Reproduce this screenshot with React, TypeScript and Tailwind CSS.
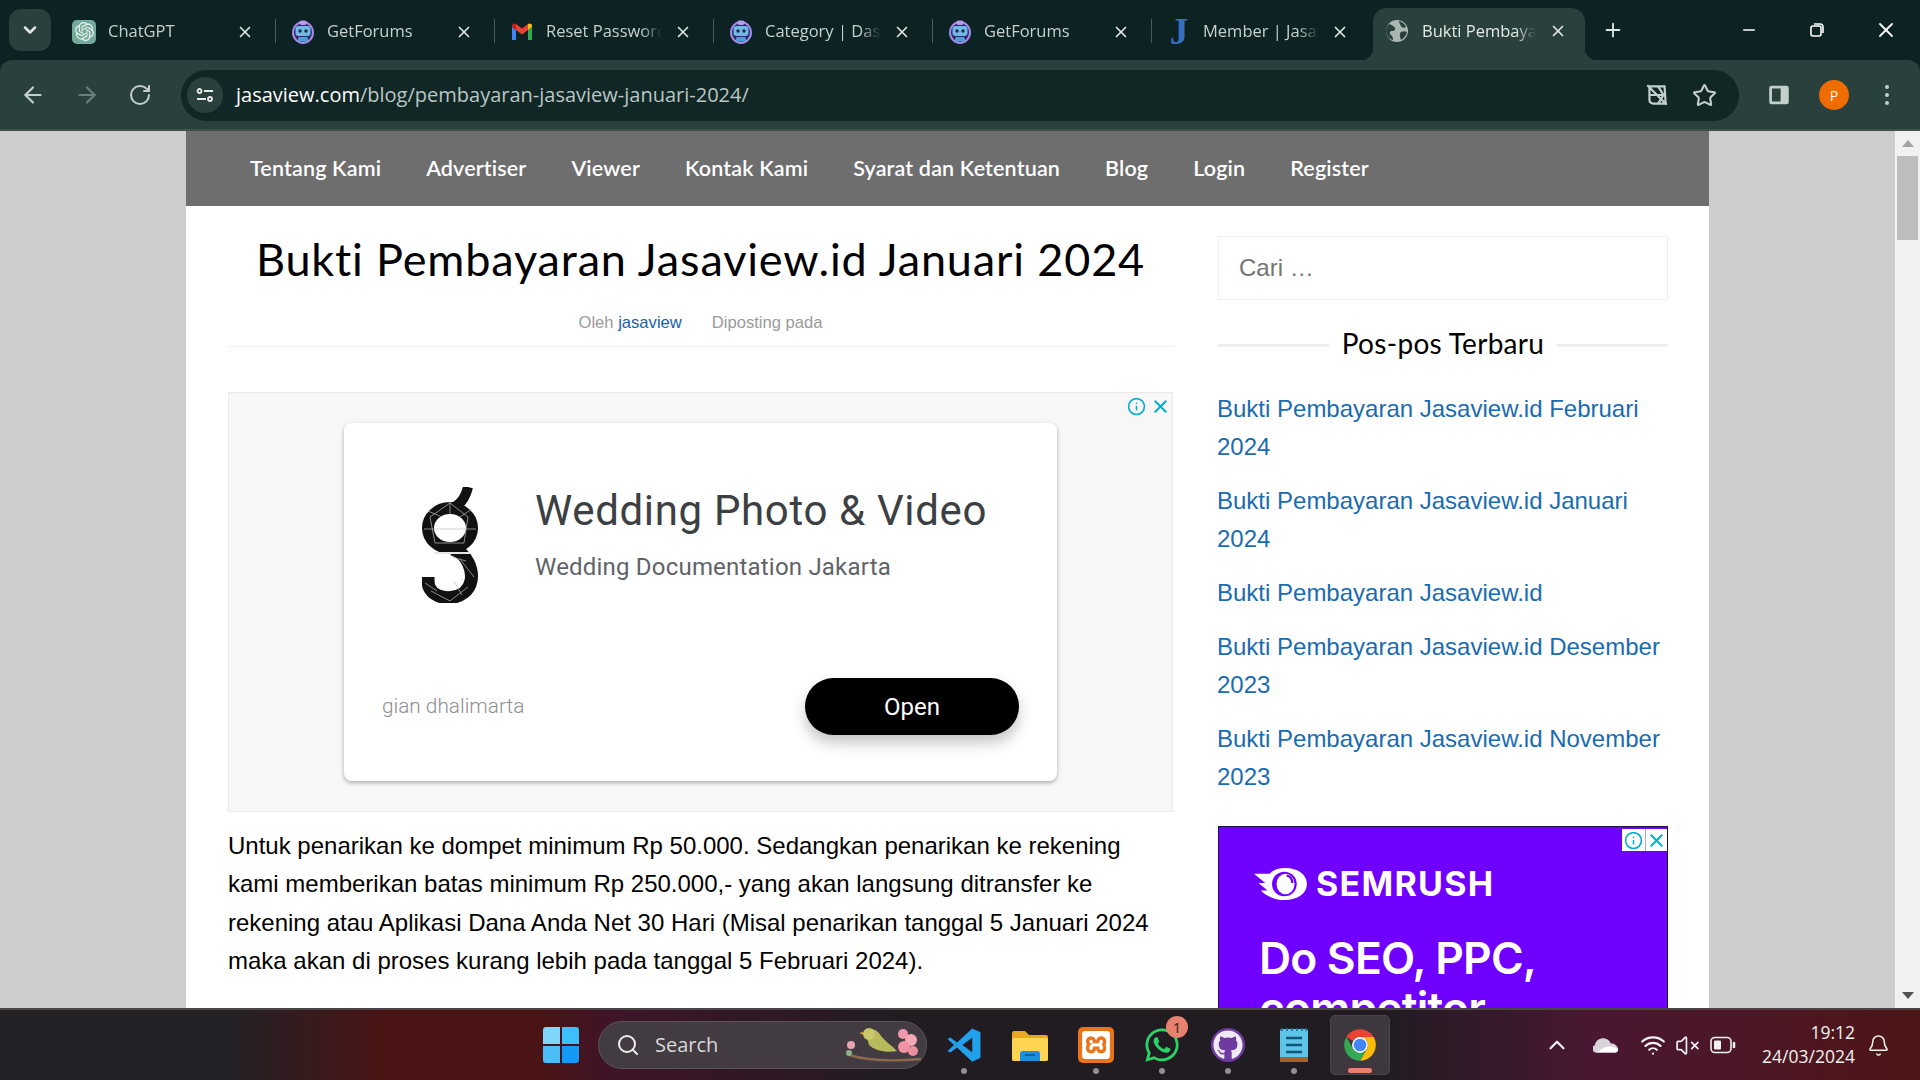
import React from "react"
import { ArrowLeft, ArrowRight, RotateCw, ChevronDown, ChevronUp, X, Plus, Minus, Star, Search, Wifi, VolumeX, Bell, Info } from "lucide-react"
import { SiOpenai, SiXampp } from "react-icons/si"
import { FaWhatsapp, FaGithub } from "react-icons/fa"

const RobotIcon = () => (
  <svg viewBox="0 0 24 24" className="w-6 h-6 shrink-0">
    <ellipse cx="12" cy="12.500" rx="10" ry="10.500" fill="#2a2a6a" stroke="#a78bea" strokeWidth="2" />
    <rect x="8.500" y="0.500" width="7" height="4.500" rx="2" fill="#b79cf0" />
    <rect x="4.500" y="6" width="15" height="10" rx="3" fill="#6fb9e4" />
    <circle cx="9" cy="11" r="1.700" fill="#14304a" />
    <circle cx="15" cy="11" r="1.700" fill="#14304a" />
    <rect x="7" y="17" width="10" height="4.500" rx="1.500" fill="#4f9fd4" />
  </svg>
)

const GmailIcon = () => (
  <svg viewBox="0 0 24 24" className="w-6 h-6 shrink-0">
    <path d="M2 20h4V10L2 7z" fill="#4285f4" />
    <path d="M18 20h4V7l-4 3z" fill="#34a853" />
    <path d="M18 4v6l4-3V5.500c0-1.800-2.400-2.800-4-1.500" fill="#fbbc04" />
    <path d="M6 10V4l6 4.500L18 4v6l-6 4.500z" fill="#ea4335" />
    <path d="M2 5.500V7l4 3V4C4.400 2.700 2 3.700 2 5.500" fill="#c5221f" />
  </svg>
)

const GlobeIcon = () => (
  <svg viewBox="0 0 24 24" className="w-6 h-6 shrink-0">
    <circle cx="12" cy="12" r="11" fill="#aab6b4" />
    <path d="M4 5c3 1 5 2 6 4s-1 3-3 3-3 2-1 4 2 3 2 5c-4-1-7-5-7-9 0-3 1-5 3-7zM14 2c3 1 6 3 7 6-2 1-4 1-5-1s-2-3-2-5zM16 13c2-1 4-1 6 0-1 4-3 6-6 8-1-3-2-6 0-8z" fill="#2a403d" />
  </svg>
)

const ChatGptIcon = () => (
  <span className="w-6 h-6 shrink-0 rounded-[5px] bg-[#74aa9c] flex items-center justify-center">
    <SiOpenai className="w-[19px] h-[19px] text-[#e8f2ef]" />
  </span>
)

const JIcon = () => (
  <span className="w-6 h-6 shrink-0 flex items-center justify-center text-[#3a6fc0] font-bold text-[37px] leading-none font-['Liberation_Serif',serif]">J</span>
)

const tabs = [
  { title: "ChatGPT", icon: <ChatGptIcon /> },
  { title: "GetForums", icon: <RobotIcon /> },
  { title: "Reset Password", icon: <GmailIcon /> },
  { title: "Category | Dashboard", icon: <RobotIcon /> },
  { title: "GetForums", icon: <RobotIcon /> },
  { title: "Member | Jasaview", icon: <JIcon /> },
]

const navLinks = ["Tentang Kami", "Advertiser", "Viewer", "Kontak Kami", "Syarat dan Ketentuan", "Blog", "Login", "Register"]

const recent = [
  "Bukti Pembayaran Jasaview.id Februari 2024",
  "Bukti Pembayaran Jasaview.id Januari 2024",
  "Bukti Pembayaran Jasaview.id",
  "Bukti Pembayaran Jasaview.id Desember 2023",
  "Bukti Pembayaran Jasaview.id November 2023",
]

const TabStrip = () => (
  <div className="h-[60px] bg-[#0d2323] flex items-start font-['Open_Sans',sans-serif] text-[16.5px]">
    <div className="ml-[9px] mt-[9px] w-[42px] h-[42px] rounded-[12px] bg-[#2a403d] flex items-center justify-center text-[#dfe6e4]">
      <ChevronDown size={20} strokeWidth={3} />
    </div>
    <div className="ml-[6px] flex h-[51px] mt-[9px]">
      {tabs.map((t, i) => (
        <div key={i} className="w-[219px] flex items-center pl-[15px] pr-[22px] pb-[6px] gap-[12px] relative">
          {t.icon}
          <span className="flex-1 whitespace-nowrap overflow-hidden text-[#c6d0ce] [mask-image:linear-gradient(to_right,black_82%,transparent)]">{t.title}</span>
          <X size={18} strokeWidth={2.2} className="text-[#dfe6e4] shrink-0" />
          {i < 5 && <span className="absolute right-0 top-[10px] h-[24px] w-px bg-[#4a5d5a]" />}
        </div>
      ))}
      <div className="w-[212px] -mt-px h-[52px] ml-[2px] bg-[#2a403d] rounded-t-[14px] flex items-center pl-[12px] pr-[18px] pb-[6px] gap-[13px] relative">
        <span className="absolute -left-[12px] bottom-0 w-3 h-3 bg-[radial-gradient(circle_at_0_0,transparent_12px,#2a403d_12.5px)]" />
        <span className="absolute -right-[12px] bottom-0 w-3 h-3 bg-[radial-gradient(circle_at_100%_0,transparent_12px,#2a403d_12.5px)]" />
        <GlobeIcon />
        <span className="flex-1 whitespace-nowrap overflow-hidden text-[#e4eae8] [mask-image:linear-gradient(to_right,black_82%,transparent)]">Bukti Pembayaran</span>
        <X size={18} strokeWidth={2.2} className="text-[#e4eae8] shrink-0" />
      </div>
    </div>
    <div className="ml-[17px] mt-[19px] text-[#dfe6e4]">
      <Plus size={22} strokeWidth={2} />
    </div>
    <div className="ml-auto flex h-[60px] text-white">
      <div className="w-[68px] flex items-center justify-center -translate-x-px"><Minus size={18} strokeWidth={2} /></div>
      <div className="w-[68px] flex items-center justify-center -translate-x-px">
        <svg viewBox="0 0 16 16" className="w-4 h-4" fill="none" stroke="currentColor" strokeWidth="1.6">
          <rect x="2" y="4" width="10" height="10" rx="2" />
          <path d="M5 2h6a3 3 0 0 1 3 3v6" />
        </svg>
      </div>
      <div className="w-[68px] flex items-center justify-center"><X size={24} strokeWidth={1.8} /></div>
    </div>
  </div>
)

const Toolbar = () => (
  <div className="h-[71px] bg-[#2a403d] rounded-t-[12px] border-b-2 border-[#3f504e] flex items-center pt-px text-[#c3cfcc]">
    <div className="w-[181px] flex items-center pl-[20px] gap-[28px] shrink-0">
      <ArrowLeft size={26} strokeWidth={2} />
      <ArrowRight size={26} strokeWidth={2} className="text-[#6d7e7b]" />
      <RotateCw size={24} strokeWidth={2} />
    </div>
    <div className="w-[1558px] h-[51px] rounded-full bg-[#112726] flex items-center pl-[6px] pr-[22px]">
      <div className="w-[36px] h-[36px] rounded-full bg-[#2a403d] flex items-center justify-center shrink-0">
        <svg viewBox="0 0 20 20" className="w-5 h-5" fill="none" stroke="#e4eae8" strokeWidth="1.8">
          <path d="M9 6h9M2 14h9" />
          <circle cx="4.500" cy="6" r="2" />
          <circle cx="15" cy="14" r="2" />
        </svg>
      </div>
      <div className="ml-[13px] text-[20px] font-['Open_Sans',sans-serif] whitespace-nowrap">
        <span className="text-white">jasaview.com</span>
        <span className="text-[#b9c6c3]">/blog/pembayaran-jasaview-januari-2024/</span>
      </div>
      <div className="ml-auto flex items-center gap-[22px]">
        <svg viewBox="0 0 24 24" className="w-[26px] h-[26px]" fill="none" stroke="#c3cfcc" strokeWidth="2">
          <path d="M5 4h14l1 16H9c-2.500 0-4-1.500-4-4zM5 12h15M13 4l5 8-5 8M3 3l18 18" />
        </svg>
        <Star size={25} strokeWidth={2} />
      </div>
    </div>
    <div className="ml-[27px] flex items-center">
      <svg viewBox="0 0 24 24" className="w-[26px] h-[26px]">
        <rect x="3" y="3.500" width="18" height="17" rx="2" fill="#c3cfcc" />
        <rect x="5.500" y="6" width="8" height="12" fill="#2a403d" />
      </svg>
      <div className="ml-[27px] w-[30px] h-[30px] rounded-full bg-[#ef6c00] text-white text-[14px] flex items-center justify-center font-['Open_Sans',sans-serif]">P</div>
      <div className="ml-[36px] flex flex-col gap-[4px]">
        <span className="w-1 h-1 rounded-full bg-[#c3cfcc]" />
        <span className="w-1 h-1 rounded-full bg-[#c3cfcc]" />
        <span className="w-1 h-1 rounded-full bg-[#c3cfcc]" />
      </div>
    </div>
  </div>
)

const GLogo = () => (
  <svg viewBox="0 0 56 116" className="w-[56px] h-[116px]" fill="none">
    <path d="M28 22C38 18 43 12 46 0" stroke="#111" strokeWidth="10" />
    <ellipse cx="28" cy="41" rx="22" ry="20" stroke="#111" strokeWidth="12" />
    <path d="M30 62C46 66 51 84 49 94 45 114 14 116 7 100 6 97 6 94 6 90" stroke="#111" strokeWidth="13" />
    <path d="M8 30 28 16l18 14-4 26H13zM2 42h52M28 15v12M9 104l19 10 18-14M38 72l14 18M6 24l14 6M50 22l-12 8M44 74 30 70M3 96l12 8M40 108l-8-14" stroke="#bdbdbd" strokeWidth="0.7" />
    <path d="M12 66h36" stroke="#e4e4e4" strokeWidth="1.800" />
  </svg>
)

const AdBadge = ({ boxed }: { boxed?: boolean }) => (
  <div className={boxed ? "flex bg-white h-[22px]" : "flex items-center gap-[2px] h-[22px]"}>
    <Info size={boxed ? 19 : 19} strokeWidth={2} className="text-[#00aecd] mx-[2px] self-center" />
    {boxed && <span className="w-px bg-[#b9a5d8]" />}
    <X size={boxed ? 21 : 21} strokeWidth={2.2} className="text-[#00aecd] self-center" />
  </div>
)

const WeddingAd = () => (
  <div className="h-[420px] bg-[#f7f7f7] border border-[#eaeaea] relative flex items-center justify-center font-['Roboto',sans-serif]">
    <div className="absolute top-[2px] right-[1px]"><AdBadge /></div>
    <div className="w-[713px] h-[358px] bg-white rounded-[8px] shadow-[0_2px_4px_rgba(60,64,67,0.4)] flex flex-col">
      <div className="flex pt-[64px] pl-[78px]">
        <GLogo />
        <div className="ml-[57px] pt-[1px]">
          <div className="text-[42px] leading-[46px] text-[#3c4043] tracking-[0.65px]">Wedding Photo &amp; Video</div>
          <div className="mt-[19px] text-[24px] leading-[28px] text-[#5f6368] tracking-[0.2px]">Wedding Documentation Jakarta</div>
        </div>
      </div>
      <div className="mt-[75px] flex items-center justify-between pl-[38px] pr-[38px]">
        <span className="text-[20.8px] font-light text-[#8f8f8f]">gian dhalimarta</span>
        <span className="w-[214px] h-[57px] rounded-full bg-black text-white text-[24px] flex items-center justify-center shadow-[0_8px_14px_rgba(60,64,67,0.3)]">Open</span>
      </div>
    </div>
  </div>
)

const SemrushAd = () => (
  <div className="mt-[30px] h-[240px] bg-[#6f00ff] border border-[#20104a] relative font-['Inter',sans-serif] text-white">
    <div className="absolute top-[2px] right-0"><AdBadge boxed /></div>
    <div className="pt-[40px] pl-[35px] flex items-center">
      <svg viewBox="0 0 48 34" preserveAspectRatio="none" className="w-[54px] h-[32px]">
        <path d="M0 6h14c4-5 9-6 14-6 11 0 19 7 19 17s-8 17-20 17C17 34 9 28 6 24h6L4 16h6z" fill="#fff" />
        <ellipse cx="27" cy="17" rx="11" ry="13" fill="#6f00ff" />
        <ellipse cx="28" cy="17" rx="8" ry="11" fill="#fff" />
        <path d="M29 8c4 1 5 5 5 8" stroke="#6f00ff" strokeWidth="2" fill="none" />
      </svg>
      <span className="ml-[8px] text-[34px] font-bold leading-none tracking-[1.3px]">SEMRUSH</span>
    </div>
    <div className="mt-[32px] pl-[40px] text-[44.4px] leading-[50px] font-semibold tracking-[-0.8px]">
      Do SEO, PPC,
      <br />
      competitor
    </div>
  </div>
)

const Page = () => (
  <div className="flex-1 min-h-0 flex overflow-hidden bg-[#cdcdcd]">
    <div className="w-[186px] shrink-0" />
    <div className="w-[1523px] shrink-0 bg-white">
      <nav className="h-[75px] bg-[#6e6e6e] flex items-center pl-[64px] gap-[45px] text-white text-[21.5px] tracking-[0.15px] font-semibold font-['Lato',sans-serif]">
        {navLinks.map((l) => (
          <span key={l}>{l}</span>
        ))}
      </nav>
      <div className="flex pl-[42px]">
        <main className="w-[945px] shrink-0">
          <h1 className="mt-[23px] text-center text-[45px] leading-[60px] text-black font-['Lato',sans-serif] tracking-[0.85px]">Bukti Pembayaran Jasaview.id Januari 2024</h1>
          <div className="mt-[22px] pb-[11px] border-b border-[#eeeeee] text-center text-[16.6px] leading-[24px] text-[#9a9a9a] font-['Liberation_Sans',sans-serif] flex justify-center gap-[30px]">
            <span>Oleh <span className="text-[#1a5fa8]">jasaview</span></span>
            <span>Diposting pada</span>
          </div>
          <div className="mt-[45px]"><WeddingAd /></div>
          <p className="mt-[15px] text-[24px] leading-[38.4px] text-black font-['Liberation_Sans',sans-serif]">
            Untuk penarikan ke dompet minimum Rp 50.000. Sedangkan penarikan ke rekening kami memberikan batas minimum Rp 250.000,- yang akan langsung ditransfer ke rekening atau Aplikasi Dana Anda Net 30 Hari (Misal penarikan tanggal 5 Januari 2024 maka akan di proses kurang lebih pada tanggal 5 Februari 2024).
          </p>
        </main>
        <aside className="ml-[45px] w-[450px] shrink-0">
          <div className="mt-[30px] h-[64px] border border-[#eeeeee] flex items-center pl-[20px] text-[24px] text-[#757575] font-['Liberation_Sans',sans-serif]">Cari …</div>
          <div className="mt-[23px] flex items-center gap-[13px]">
            <span className="flex-1 h-[3px] mt-[5px] bg-[#eeeeee]" />
            <h2 className="text-[28px] leading-[40px] tracking-[0.3px] text-black font-['Lato',sans-serif]">Pos-pos Terbaru</h2>
            <span className="flex-1 h-[3px] mt-[5px] bg-[#eeeeee]" />
          </div>
          <ul className="mt-[27px] -ml-px flex flex-col gap-[16px] text-[24px] leading-[38px] text-[#1a6bb0] font-['Liberation_Sans',sans-serif]">
            {recent.map((r) => (
              <li key={r}>{r}</li>
            ))}
          </ul>
          <SemrushAd />
        </aside>
      </div>
    </div>
    <div className="w-[186px] shrink-0" />
    <div className="w-[25px] shrink-0 bg-[#f1f1f1] flex flex-col items-center">
      <span className="mt-[9px] w-0 h-0 border-x-[6px] border-x-transparent border-b-[7px] border-b-[#a3a3a3]" />
      <span className="mt-[9px] w-[21px] h-[84px] bg-[#bdbdbd]" />
      <span className="mt-auto mb-[9px] w-0 h-0 border-x-[6px] border-x-transparent border-t-[7px] border-t-[#505050]" />
    </div>
  </div>
)

const Dot = () => <span className="absolute bottom-[1px] left-1/2 -translate-x-1/2 w-[6px] h-[6px] rounded-full bg-[#8f8f8f]" />

const AppSlot = ({ children, dot, className }: { children: React.ReactNode; dot?: boolean; className?: string }) => (
  <div className={"w-[60px] h-[60px] relative flex items-center justify-center " + (className || "")}>
    {children}
    {dot && <Dot />}
  </div>
)

const Taskbar = () => (
  <div className="h-[72px] shrink-0 border-t-2 border-[#4a4446] bg-[linear-gradient(90deg,#232126_0%,#232126_12%,#4a1414_20%,#4a1414_28%,#3f1428_32%,#201c22_47%,#201c22_72%,#4a1733_83%,#4f1616_100%)] flex items-center relative text-white font-['Open_Sans',sans-serif]">
    <div className="ml-[543px] w-[36px] h-[36px] grid grid-cols-2 gap-[2px]">
      <span className="rounded-tl-[3px] bg-[#7fd6fb]" />
      <span className="rounded-tr-[3px] bg-[#3cc0fb]" />
      <span className="rounded-bl-[3px] bg-[#4dbdf9]" />
      <span className="rounded-br-[3px] bg-[#159bf5]" />
    </div>
    <div className="ml-[19px] w-[329px] h-[48px] rounded-full bg-[#423c42] border border-[#5b555a] flex items-center pl-[17px] text-[20px] text-[#d8d8d8] relative">
      <Search size={24} strokeWidth={2} className="text-[#ededed]" />
      <span className="ml-[15px]">Search</span>
      <svg viewBox="0 0 80 40" className="absolute right-[3px] top-[3px] w-[80px] h-[40px]">
        <path d="M6 30c20 6 50 6 72 4" stroke="#8a6a48" strokeWidth="2.500" fill="none" />
        <path d="M22 6c6-4 13-1 16 5 4 5 10 9 16 15-10 2-22 0-28-6z" fill="#b8b95a" />
        <circle cx="26" cy="9" r="6" fill="#c8c86a" />
        <path d="M21 7l-5 1 5 2z" fill="#d8b040" />
        <circle cx="60" cy="9" r="5" fill="#ef9aa8" />
        <circle cx="68" cy="15" r="6" fill="#f4a8b4" />
        <circle cx="61" cy="22" r="6" fill="#f191a2" />
        <circle cx="70" cy="26" r="5" fill="#ee8fa0" />
        <circle cx="8" cy="20" r="4" fill="#e9a4ae" />
        <circle cx="6" cy="28" r="3" fill="#8fb08a" />
      </svg>
    </div>
    <div className="ml-[7px] flex gap-[6px]">
      <AppSlot dot>
        <svg viewBox="0 0 24 24" className="w-[38px] h-[38px]">
          <path fillRule="evenodd" d="M17.200 1.500 7.600 10.400 3.400 7.200 1.600 8.200 5.700 12l-4.100 3.800 1.800 1 4.200-3.200 9.600 8.900 5.200-2.400V3.900zM17.200 7.400v9.200L11 12z" fill="#23a0ec" />
        </svg>
      </AppSlot>
      <AppSlot>
        <svg viewBox="0 0 36 36" className="w-[36px] h-[36px]">
          <path d="M0 6a2 2 0 0 1 2-2h11l4 4h17a2 2 0 0 1 2 2v22a2 2 0 0 1-2 2H2a2 2 0 0 1-2-2z" fill="#e8a81f" />
          <rect y="11" width="36" height="23" rx="2" fill="#ffd452" />
          <path d="M8 34v-7a3 3 0 0 1 3-3h14a3 3 0 0 1 3 3v7z" fill="#1d8fe0" />
          <rect x="13" y="27" width="10" height="2" fill="#0a5fa8" />
        </svg>
      </AppSlot>
      <AppSlot dot>
        <span className="w-[36px] h-[36px] rounded-[5px] bg-[#e8741e] flex items-center justify-center">
          <SiXampp className="w-[28px] h-[28px] text-white" />
        </span>
      </AppSlot>
      <AppSlot dot>
        <FaWhatsapp className="w-[38px] h-[38px] text-[#2bd366]" />
        <span className="absolute top-[1px] right-[4px] w-[22px] h-[22px] rounded-full bg-[#e8826e] text-[#2a1a18] text-[14px] flex items-center justify-center">1</span>
      </AppSlot>
      <AppSlot dot>
        <span className="w-[34px] h-[34px] rounded-full bg-[#6e3aa0] flex items-center justify-center">
          <FaGithub className="w-[30px] h-[30px] text-[#f0eaf6]" />
        </span>
      </AppSlot>
      <AppSlot dot>
        <svg viewBox="0 0 30 36" className="w-[30px] h-[36px]">
          <rect x="1" y="2" width="28" height="32" rx="2" fill="#5fc5e8" />
          <rect x="1" y="30" width="28" height="5" fill="#a5622a" />
          <path d="M3 1v3M8 1v3M13 1v3M18 1v3M23 1v3M27 1v3" stroke="#1b6f96" strokeWidth="1.600" />
          <path d="M7 11h16M7 18h16M7 25h16" stroke="#11567a" strokeWidth="2.400" />
        </svg>
      </AppSlot>
      <AppSlot className="rounded-[5px] bg-[#3c383d] border border-[#4a4549]">
        <svg viewBox="0 0 48 48" className="w-[38px] h-[38px]">
          <path d="M24 4A20 20 0 0 1 41.320 14H24A10 10 0 0 0 15.340 19L6.680 14A20 20 0 0 1 24 4Z" fill="#ea4335" />
          <path d="M41.320 14A20 20 0 0 1 24 44L32.660 29A10 10 0 0 0 24 14Z" fill="#fbbc04" />
          <path d="M6.680 14 15.340 29A10 10 0 0 0 32.660 29L24 44A20 20 0 0 1 6.680 14Z" fill="#34a853" />
          <circle cx="24" cy="24" r="10" fill="#fff" />
          <circle cx="24" cy="24" r="8" fill="#4285f4" />
        </svg>
        <span className="absolute bottom-[1px] left-1/2 -translate-x-1/2 w-[24px] h-[5px] rounded-full bg-[#e8826e]" />
      </AppSlot>
    </div>
    <div className="ml-auto flex items-center text-[#f2f2f2]">
      <ChevronUp size={26} strokeWidth={2} />
      <svg viewBox="0 0 28 18" className="ml-[23px] w-[26px] h-[18px]">
        <path d="M3 17a4 4 0 0 1-1-7.800C3 4 8 1 13 2c3 .6 5 2.500 6 5 4 0 8 3 8 6.500 0 2-1 3.500-3 3.500z" fill="#d9d3d9" />
        <path d="M3 17h21c2 0 3-1.500 3-3.500C22 9 14 10 8 14z" fill="#fff" />
      </svg>
      <Wifi size={26} strokeWidth={2} className="ml-[21px]" />
      <VolumeX size={25} strokeWidth={1.6} className="ml-[9px]" />
      <svg viewBox="0 0 26 18" className="ml-[10px] w-[26px] h-[18px]" fill="none" stroke="currentColor" strokeWidth="1.600">
        <rect x="1" y="1.500" width="20" height="15" rx="4" />
        <rect x="4" y="4.500" width="7" height="9" rx="1" fill="currentColor" stroke="none" />
        <path d="M24 7v4" strokeWidth="2.500" strokeLinecap="round" />
      </svg>
      <div className="ml-[27px] w-[92px] pb-[3px] text-right text-[17.5px] leading-[24px] whitespace-nowrap flex flex-col items-end">
        <span>19:12</span>
        <span>24/03/2024</span>
      </div>
      <Bell size={23} strokeWidth={1.6} className="ml-[12px] mr-[30px]" />
    </div>
  </div>
)

const App = () => {
  return (
    <div className="w-[1920px] h-[1080px] flex flex-col overflow-hidden bg-[#0d2323]">
      <TabStrip />
      <Toolbar />
      <Page />
      <Taskbar />
    </div>
  )
}

export default App
